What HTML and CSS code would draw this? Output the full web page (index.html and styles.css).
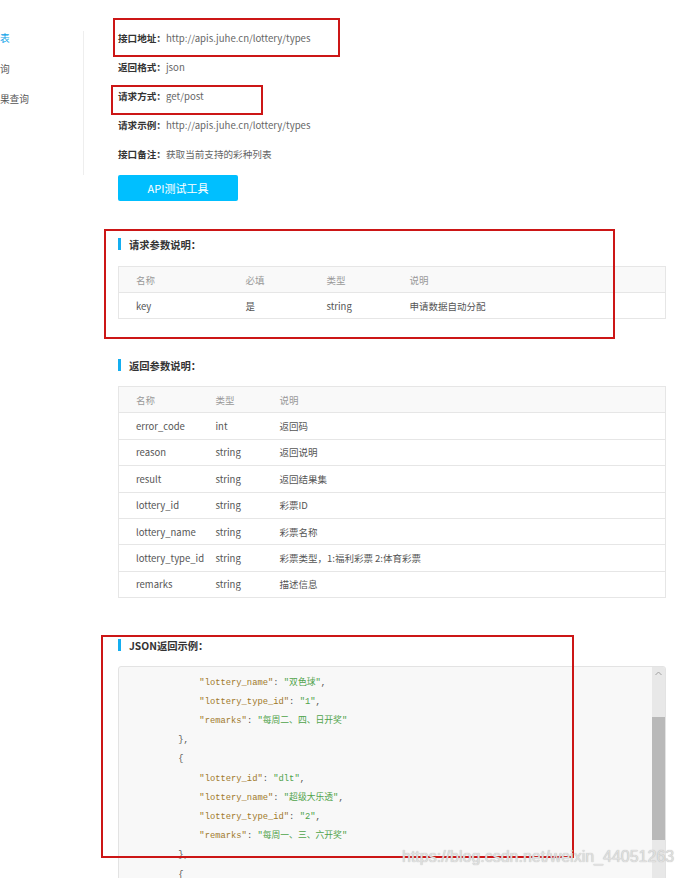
FILE: index.html
```html
<!DOCTYPE html>
<html lang="zh-CN">
<head>
<meta charset="utf-8">
<title>彩票种类列表</title>
<link rel="stylesheet" href="styles.css">
</head>
<body>
<div class="page">
  <aside class="sidebar">
    <ul class="nav">
      <li class="active">彩票种类列表</li>
      <li>开奖结果查询</li>
      <li>历史开奖结果查询</li>
    </ul>
  </aside>
  <main class="main">
    <div class="info-row"><span class="label">接口地址：</span><span class="val">http://apis.juhe.cn/lottery/types</span></div>
    <div class="info-row"><span class="label">返回格式：</span><span class="val">json</span></div>
    <div class="info-row"><span class="label">请求方式：</span><span class="val">get/post</span></div>
    <div class="info-row"><span class="label">请求示例：</span><span class="val">http://apis.juhe.cn/lottery/types</span></div>
    <div class="info-row"><span class="label">接口备注：</span><span class="val">获取当前支持的彩种列表</span></div>
    <div class="btn">API测试工具</div>

    <h3 class="sec-title sec1">请求参数说明：</h3>
    <table class="tbl tbl1">
      <colgroup><col class="c1"><col class="c2"><col class="c3"><col></colgroup>
      <thead><tr><th>名称</th><th>必填</th><th>类型</th><th>说明</th></tr></thead>
      <tbody><tr><td>key</td><td>是</td><td>string</td><td>申请数据自动分配</td></tr></tbody>
    </table>

    <h3 class="sec-title sec2">返回参数说明：</h3>
    <table class="tbl tbl2">
      <colgroup><col class="d1"><col class="d2"><col></colgroup>
      <thead><tr><th>名称</th><th>类型</th><th>说明</th></tr></thead>
      <tbody>
        <tr><td>error_code</td><td>int</td><td>返回码</td></tr>
        <tr><td>reason</td><td>string</td><td>返回说明</td></tr>
        <tr><td>result</td><td>string</td><td>返回结果集</td></tr>
        <tr><td>lottery_id</td><td>string</td><td>彩票ID</td></tr>
        <tr><td>lottery_name</td><td>string</td><td>彩票名称</td></tr>
        <tr><td>lottery_type_id</td><td>string</td><td>彩票类型，1:福利彩票 2:体育彩票</td></tr>
        <tr><td>remarks</td><td>string</td><td>描述信息</td></tr>
      </tbody>
    </table>

    <h3 class="sec-title sec3">JSON返回示例：</h3>
    <div class="code-box">
      <div class="code-area">
<pre class="code">            <span class="k">"lottery_id"</span>: <span class="s">"ssq"</span>,
            <span class="k">"lottery_name"</span>: <span class="s">"双色球"</span>,
            <span class="k">"lottery_type_id"</span>: <span class="s">"1"</span>,
            <span class="k">"remarks"</span>: <span class="s">"每周二、四、日开奖"</span>
        },
        {
            <span class="k">"lottery_id"</span>: <span class="s">"dlt"</span>,
            <span class="k">"lottery_name"</span>: <span class="s">"超级大乐透"</span>,
            <span class="k">"lottery_type_id"</span>: <span class="s">"2"</span>,
            <span class="k">"remarks"</span>: <span class="s">"每周一、三、六开奖"</span>
        },
        {
            <span class="k">"lottery_id"</span>: <span class="s">"qlc"</span>,</pre>
      </div>
      <div class="scrollbar">
        <div class="sb-up"><svg width="7" height="5" viewBox="0 0 7 5"><path d="M0.5 4L3.5 1L6.5 4" fill="none" stroke="#a0a0a0" stroke-width="1"/></svg></div>
        <div class="sb-thumb"></div>
      </div>
    </div>
  </main>
</div>

<div class="mark m1"></div>
<div class="mark m2"></div>
<div class="mark m3"></div>
<div class="mark m4"></div>
<div class="watermark">https://blog.csdn.net/weixin_44051263</div>
</body>
</html>
```
FILE: styles.css
```css
* { box-sizing: border-box; }
html, body { margin: 0; padding: 0; }
body {
  width: 682px;
  height: 878px;
  overflow: hidden;
  position: relative;
  background: #fff;
  color: #555;
  font-family: "Microsoft YaHei", "Noto Sans CJK SC", sans-serif;
}
.page { display: flex; align-items: flex-start; }

.sidebar {
  flex: none;
  width: 84px;
  height: 144px;
  margin-top: 31px;
  border-right: 1px solid #eeeeee;
  overflow: hidden;
}
.nav {
  list-style: none;
  margin: -8px 0 0 -48.5px;
  padding: 0;
  font-size: 9.7px;
  white-space: nowrap;
}
.nav li { line-height: 30.5px; color: #555; }
.nav li.active { color: #0aa2e8; }

.main {
  flex: none;
  width: 548px;
  margin-left: 34px;
  padding-top: 24px;
}
.info-row {
  height: 29px;
  line-height: 29px;
  font-size: 9.6px;
  white-space: nowrap;
}
.label { font-weight: bold; color: #333; }
.val { color: #666; }

.btn {
  width: 120px;
  height: 26px;
  margin-top: 6px;
  background: #00bfff;
  color: #fff;
  font-size: 11px;
  line-height: 26px;
  text-align: center;
  border-radius: 2px;
}

.sec-title {
  display: flex;
  align-items: center;
  gap: 8px;
  height: 20px;
  margin: 0;
  font-size: 10.3px;
  font-weight: bold;
  color: #333;
}
.sec-title::before {
  content: "";
  width: 3px;
  height: 12px;
  background: #14aef0;
}
.sec1 { margin-top: 33px; }
.sec2 { margin-top: 36px; }
.sec3 { margin-top: 37px; }

.tbl {
  width: 548px;
  border-collapse: collapse;
  table-layout: fixed;
  font-size: 9.5px;
  border: 1px solid #e6e6e6;
}
.tbl1 { margin-top: 12px; }
.tbl2 { margin-top: 11px; }
.tbl th, .tbl td {
  text-align: left;
  padding: 0 0 0 17px;
  border-bottom: 1px solid #e6e6e6;
  font-weight: normal;
  white-space: nowrap;
}
.tbl th { color: #999; background: #f9f9f9; }
.tbl td { color: #555; }
.tbl1 tr { height: 26px; }
.tbl2 tr { height: 26.4px; }
.c1 { width: 110px; }
.c2 { width: 81px; }
.c3 { width: 83px; }
.d1 { width: 80px; }
.d2 { width: 64px; }

.code-box {
  display: flex;
  margin-top: 11px;
  height: 240px;
  border: 1px solid #e3e3e3;
  border-radius: 3px;
  background: #f8f8f8;
  overflow: hidden;
}
.code-area { flex: 1; overflow: hidden; }
.code {
  margin: -12.8px 0 0 0;
  padding-left: 17px;
  font-family: "Liberation Mono", "Noto Sans CJK SC", monospace;
  font-size: 8.8px;
  line-height: 19.2px;
  color: #555;
}
.k { color: #a0782a; }
.s { color: #4fa34a; }

.scrollbar {
  flex: none;
  width: 13px;
  background: #e8e8e8;
  display: flex;
  flex-direction: column;
}
.sb-up {
  height: 50px;
  display: flex;
  justify-content: center;
  padding-top: 4px;
}
.sb-thumb { height: 123px; background: #b9b9b9; }

.mark {
  position: absolute;
  border: 2px solid #cc1616;
}
.m1 { left: 113px; top: 18px; width: 227px; height: 39px; }
.m2 { left: 111px; top: 85px; width: 152px; height: 30px; }
.m3 { left: 104px; top: 229px; width: 511px; height: 110px; }
.m4 { left: 101px; top: 635px; width: 473px; height: 223px; }

.watermark {
  position: absolute;
  left: 402px;
  top: 848px;
  font-family: "Liberation Sans", sans-serif;
  font-size: 16px;
  color: #e0e0e0;
  text-shadow: 0 0 1px #aaa;
  white-space: nowrap;
}
```
